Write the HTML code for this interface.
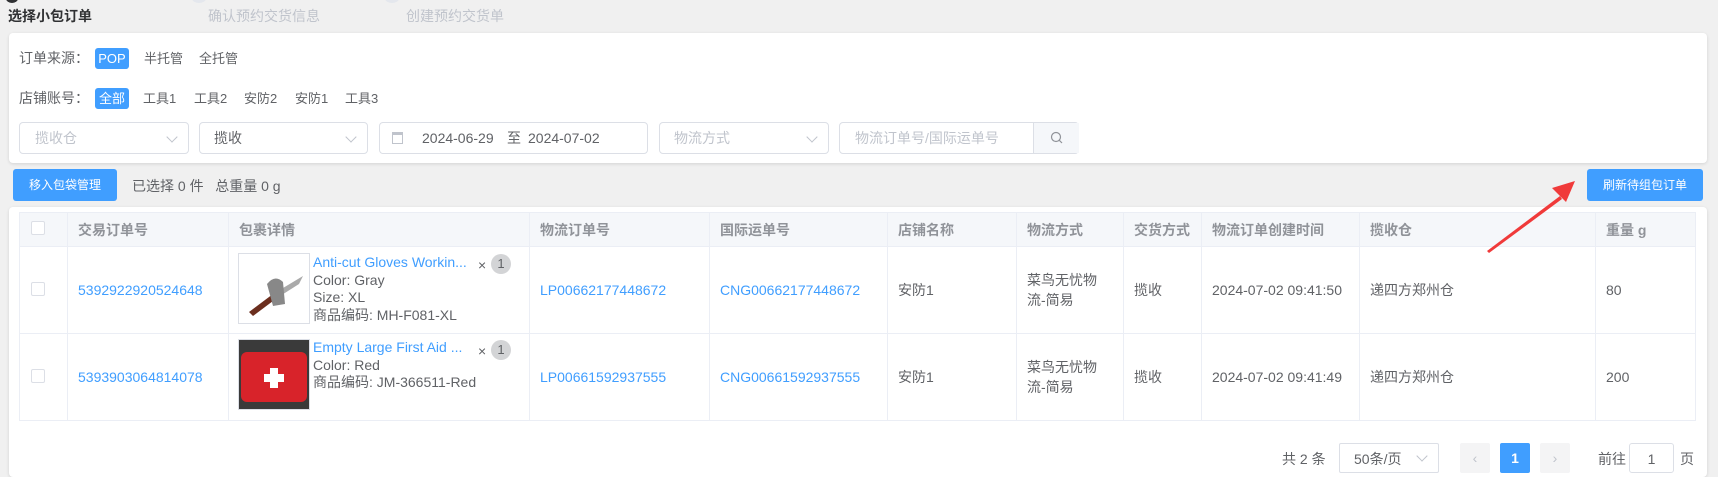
<!DOCTYPE html>
<html><head><meta charset="utf-8"><style>
*{box-sizing:border-box;margin:0;padding:0}
body{width:1718px;height:463px;overflow:hidden;background:#f0f0f0;font-family:"Liberation Sans","Noto Sans CJK SC",sans-serif;font-size:14px;color:#606266;position:relative}
.a{position:absolute;white-space:nowrap}
.card{position:absolute;background:#fff;border-radius:4px;box-shadow:0 1px 3px rgba(0,0,0,.12)}
.pill{position:absolute;height:21px;line-height:21px;padding:0 6px;border-radius:3px;font-size:13px;color:#606266}
.pill.on{background:#409eff;color:#fff}
.inp{position:absolute;top:122px;height:32px;border:1px solid #dcdfe6;border-radius:4px;background:#fff;line-height:30px;padding-left:14px;color:#606266;font-size:14px}
.ph{color:#c0c4cc}
.chev{position:absolute;right:12px;top:10px;width:8px;height:8px;border-right:1px solid #c0c4cc;border-bottom:1px solid #c0c4cc;transform:rotate(45deg)}
.btn{position:absolute;top:169px;height:32px;background:#409eff;color:#fff;border-radius:3px;text-align:center;line-height:32px;font-size:12px}
table{position:absolute;left:19px;top:212px;border-collapse:collapse;width:1677px}
td,th{border:1px solid #ebeef5;text-align:left;padding-left:10px;vertical-align:middle}
th{background:#f5f7fa;color:#909399;font-weight:bold;height:34px;font-size:14px}
td{height:87px;font-size:14px;color:#606266}
.lk{color:#409eff}
.cb{display:inline-block;width:14px;height:14px;border:1px solid #dcdfe6;border-radius:2px;background:#fff}
.img{position:absolute;width:72px;height:71px;border:1px solid #dcdfe6}
.pr{position:absolute;line-height:17.5px;font-size:14px}
.badge{position:absolute;width:20px;height:20px;border-radius:50%;background:#d3d4d6;color:#606266;text-align:center;line-height:20px;font-size:13px}
.pg{position:absolute;top:443px;height:30px;border-radius:2px;text-align:center;line-height:30px}
</style></head><body>
<div class="a" style="left:6px;top:-6px;width:12px;height:9px;border-radius:50%;background:#303133"></div>
<div class="a" style="left:192px;top:-6px;width:14px;height:9px;border-radius:50%;background:#e4e7ed"></div>
<div class="a" style="left:385px;top:-6px;width:14px;height:9px;border-radius:50%;background:#e4e7ed"></div>
<div class="a" style="left:8px;top:6px;font-size:14px;font-weight:bold;color:#303133">选择小包订单</div>
<div class="a" style="left:208px;top:6px;font-size:14px;color:#c0c4cc">确认预约交货信息</div>
<div class="a" style="left:406px;top:6px;font-size:14px;color:#c0c4cc">创建预约交货单</div>

<div class="card" style="left:9px;top:33px;width:1698px;height:130px"></div>
<div class="a" style="left:19px;top:48px">订单来源：</div>
<div class="pill on" style="left:95px;top:48px;width:34px;text-align:center;padding:0">POP</div>
<div class="pill" style="left:138px;top:48px">半托管</div>
<div class="pill" style="left:193px;top:48px">全托管</div>
<div class="a" style="left:19px;top:88px">店铺账号：</div>
<div class="pill on" style="left:95px;top:88px;width:34px;text-align:center;padding:0">全部</div>
<div class="pill" style="left:137px;top:88px">工具1</div>
<div class="pill" style="left:188px;top:88px">工具2</div>
<div class="pill" style="left:238px;top:88px">安防2</div>
<div class="pill" style="left:289px;top:88px">安防1</div>
<div class="pill" style="left:339px;top:88px">工具3</div>

<div class="inp ph" style="left:19px;width:170px;padding-left:15px">揽收仓<span class="chev"></span></div>
<div class="inp" style="left:199px;width:169px">揽收<span class="chev"></span></div>
<div class="inp" style="left:379px;width:269px;padding-left:0">
 <span class="a" style="left:12px;top:9px;width:11px;height:12px;border:1px solid #c0c4cc;border-top-width:3px"></span>
 <span class="a" style="left:42px;top:0">2024-06-29</span><span class="a" style="left:127px;top:0">至</span><span class="a" style="left:148px;top:0">2024-07-02</span></div>
<div class="inp ph" style="left:659px;width:170px">物流方式<span class="chev"></span></div>
<div class="inp ph" style="left:839px;width:240px;padding-left:15px">物流订单号/国际运单号
 <span class="a" style="left:193px;top:0;width:46px;height:30px;background:#f5f7fa;border-left:1px solid #dcdfe6"></span>
 <svg class="a" style="left:210px;top:8px" width="14" height="14" viewBox="0 0 14 14"><circle cx="6" cy="6" r="4.5" fill="none" stroke="#909399" stroke-width="1.2"/><line x1="9.3" y1="9.3" x2="12" y2="12" stroke="#909399" stroke-width="1.2"/></svg></div>

<div class="btn" style="left:13px;width:104px">移入包袋管理</div>
<div class="a" style="left:132px;top:176px;font-size:14px">已选择 0 件&nbsp;&nbsp;&nbsp;总重量 0 g</div>
<div class="btn" style="left:1587px;width:116px">刷新待组包订单</div>

<div class="card" style="left:9px;top:207px;width:1698px;height:270px"></div>
<table>
<tr><th style="width:48px;padding-left:11px"><span class="cb"></span></th><th style="width:161px">交易订单号</th><th style="width:301px">包裹详情</th><th style="width:180px">物流订单号</th><th style="width:178px">国际运单号</th><th style="width:129px">店铺名称</th><th style="width:107px">物流方式</th><th style="width:78px">交货方式</th><th style="width:158px">物流订单创建时间</th><th style="width:236px">揽收仓</th><th>重量 g</th></tr>
<tr><td style="padding-left:11px"><span class="cb"></span></td><td class="lk">5392922920524648</td><td></td><td class="lk">LP00662177448672</td><td class="lk">CNG00662177448672</td><td>安防1</td><td>菜鸟无忧物<br>流-简易</td><td>揽收</td><td>2024-07-02 09:41:50</td><td>递四方郑州仓</td><td>80</td></tr>
<tr><td style="padding-left:11px"><span class="cb"></span></td><td class="lk">5393903064814078</td><td></td><td class="lk">LP00661592937555</td><td class="lk">CNG00661592937555</td><td>安防1</td><td>菜鸟无忧物<br>流-简易</td><td>揽收</td><td>2024-07-02 09:41:49</td><td>递四方郑州仓</td><td>200</td></tr>
</table>

<div class="img" style="left:238px;top:253px;background:#fff">
<svg width="70" height="69" viewBox="0 0 70 69"><path d="M10 58 L34 40 L38 44 L14 62 Z" fill="#6b2e1e"/><path d="M34 40 L64 22 L60 30 L38 44Z" fill="#aaa"/><path d="M28 30 Q36 20 44 28 L46 50 L34 52 Z" fill="#888"/></svg></div>
<div class="pr" style="left:313px;top:254px"><span class="lk">Anti-cut Gloves Workin...</span><br>Color: Gray<br>Size: XL<br>商品编码: MH-F081-XL</div>
<div class="a" style="left:478px;top:257px">×</div><div class="badge" style="left:491px;top:254px">1</div>

<div class="img" style="left:238px;top:339px;background:#444">
<svg width="70" height="69" viewBox="0 0 70 69"><rect x="0" y="0" width="70" height="69" fill="#3a3a3a"/><rect x="2" y="12" width="66" height="50" rx="6" fill="#d8232a"/><rect x="31" y="28" width="8" height="20" fill="#fff"/><rect x="25" y="34" width="20" height="8" fill="#fff"/></svg></div>
<div class="pr" style="left:313px;top:339px"><span class="lk">Empty Large First Aid ...</span><br>Color: Red<br>商品编码: JM-366511-Red</div>
<div class="a" style="left:478px;top:343px">×</div><div class="badge" style="left:491px;top:340px">1</div>

<div class="a" style="left:1282px;top:449px">共 2 条</div>
<div class="pg" style="left:1339px;width:100px;border:1px solid #dcdfe6;text-align:left;padding-left:14px">50条/页<span class="chev" style="top:8px"></span></div>
<div class="pg" style="left:1460px;width:30px;background:#f4f4f5;color:#c0c4cc">‹</div>
<div class="pg" style="left:1500px;width:30px;background:#409eff;color:#fff;font-weight:bold">1</div>
<div class="pg" style="left:1540px;width:30px;background:#f4f4f5;color:#c0c4cc">›</div>
<div class="a" style="left:1598px;top:449px">前往</div>
<div class="pg" style="left:1629px;width:45px;border:1px solid #dcdfe6;border-radius:3px">1</div>
<div class="a" style="left:1680px;top:449px">页</div>

<svg class="a" style="left:0;top:0" width="1718" height="463"><polygon points="1487,251 1560,196 1562,199 1489,253" fill="#f03a3a"/><polygon points="1575,181 1552,188 1566,202" fill="#f03a3a"/></svg>
</body></html>
